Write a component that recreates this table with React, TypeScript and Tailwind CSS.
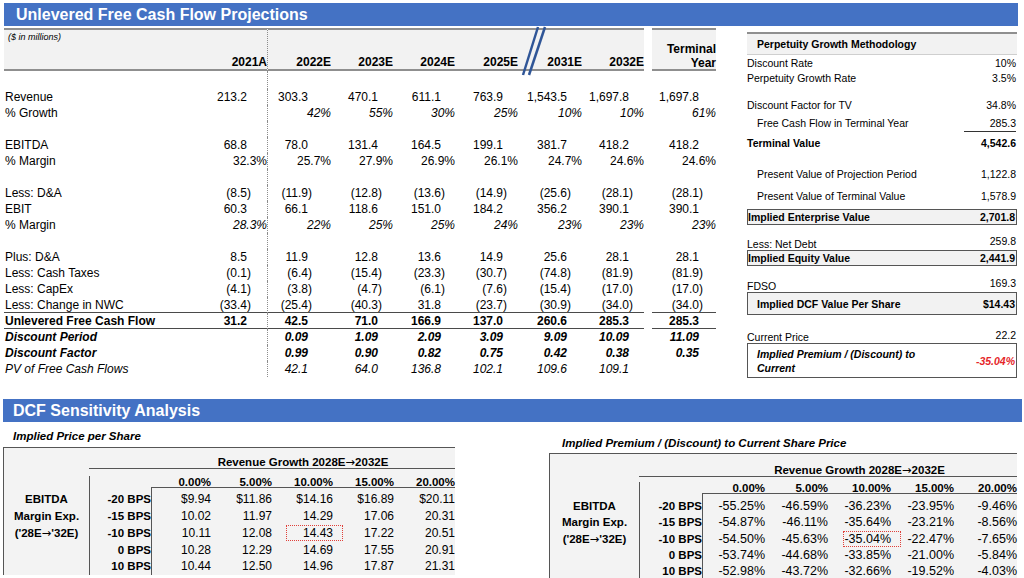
import React from "react";

/* ---------------- Projection table ---------------- */
const GRID = "grid grid-cols-[201px_63px_63px_62px_62px_63px_64px_62px_8px_64px]";
const PADS = ["pr-[16px]", "pr-[19px]", "pr-[11px]", "pr-[10px]", "pr-[11px]", "pr-[11px]", "pr-[11px]", "pr-[13px]"];
const DOT = "border-r border-dotted border-[#8c8c8c]";
const HDR = "bg-[#f2f2f2] shadow-[inset_0_2px_0_#8f8f8f,inset_0_-2px_0_#8f8f8f]";
const RULE = "shadow-[inset_0_-1px_0_#4a4a4a]";

type Kind = "num" | "pct" | "ipct" | "bold" | "bi" | "ital";
type Line = { label: string; kind: Kind; values: string[]; rule?: boolean };

const YEARS = ["2021A", "2022E", "2023E", "2024E", "2025E", "2031E", "2032E"];

const ROWS: (Line | null)[] = [
  { label: "Revenue", kind: "num", values: ["213.2", "303.3", "470.1", "611.1", "763.9", "1,543.5", "1,697.8", "1,697.8"] },
  { label: "% Growth", kind: "ipct", values: ["", "42%", "55%", "30%", "25%", "10%", "10%", "61%"] },
  null,
  { label: "EBITDA", kind: "num", values: ["68.8", "78.0", "131.4", "164.5", "199.1", "381.7", "418.2", "418.2"] },
  { label: "% Margin", kind: "pct", values: ["32.3%", "25.7%", "27.9%", "26.9%", "26.1%", "24.7%", "24.6%", "24.6%"] },
  null,
  { label: "Less: D&A", kind: "num", values: ["(8.5)", "(11.9)", "(12.8)", "(13.6)", "(14.9)", "(25.6)", "(28.1)", "(28.1)"] },
  { label: "EBIT", kind: "num", values: ["60.3", "66.1", "118.6", "151.0", "184.2", "356.2", "390.1", "390.1"] },
  { label: "% Margin", kind: "ipct", values: ["28.3%", "22%", "25%", "25%", "24%", "23%", "23%", "23%"] },
  null,
  { label: "Plus: D&A", kind: "num", values: ["8.5", "11.9", "12.8", "13.6", "14.9", "25.6", "28.1", "28.1"] },
  { label: "Less: Cash Taxes", kind: "num", values: ["(0.1)", "(6.4)", "(15.4)", "(23.3)", "(30.7)", "(74.8)", "(81.9)", "(81.9)"] },
  { label: "Less: CapEx", kind: "num", values: ["(4.1)", "(3.8)", "(4.7)", "(6.1)", "(7.6)", "(15.4)", "(17.0)", "(17.0)"] },
  { label: "Less: Change in NWC", kind: "num", rule: true, values: ["(33.4)", "(25.4)", "(40.3)", "31.8", "(23.7)", "(30.9)", "(34.0)", "(34.0)"] },
  { label: "Unlevered Free Cash Flow", kind: "bold", rule: true, values: ["31.2", "42.5", "71.0", "166.9", "137.0", "260.6", "285.3", "285.3"] },
  { label: "Discount Period", kind: "bi", values: ["", "0.09", "1.09", "2.09", "3.09", "9.09", "10.09", "11.09"] },
  { label: "Discount Factor", kind: "bi", values: ["", "0.99", "0.90", "0.82", "0.75", "0.42", "0.38", "0.35"] },
  { label: "PV of Free Cash Flows", kind: "ital", values: ["", "42.1", "64.0", "136.8", "102.1", "109.6", "109.1", ""] },
];

const labelStyle = (k: Kind) =>
  k === "bold" ? "font-bold" : k === "bi" ? "font-bold italic" : k === "ital" ? "italic" : "";
const valueStyle = (k: Kind) =>
  k === "bold" ? "font-bold" : k === "bi" ? "font-bold italic" : k === "ital" || k === "ipct" ? "italic" : "";

function ProjRow({ row }: { row: Line | null }) {
  if (!row) {
    return (
      <div className={`${GRID} h-[16px]`}>
        <div />
        <div className={DOT} />
      </div>
    );
  }
  const line = row.rule ? RULE : "";
  const pct = row.kind === "pct" || row.kind === "ipct";
  const cells: React.ReactNode[] = [];
  row.values.forEach((v, i) => {
    if (i === 7) cells.push(<div key="gap" />);
    cells.push(
      <div
        key={i}
        className={`whitespace-nowrap text-right ${pct ? "" : PADS[i]} ${valueStyle(row.kind)} ${i === 0 ? DOT : ""} ${line}`}
      >
        {v}
        {v && !pct && !v.startsWith("(") ? <span className="invisible">)</span> : null}
      </div>
    );
  });
  return (
    <div className={`${GRID} h-[16px] text-[12px] leading-[16px]`}>
      <div className={`whitespace-nowrap pl-[1px] ${labelStyle(row.kind)} ${line}`}>{row.label}</div>
      {cells}
    </div>
  );
}

function Projections() {
  return (
    <div className="relative w-[712px]">
      {/* header */}
      <div className={`${GRID} h-[43px]`}>
        <div className={`${HDR} pl-[4px] pt-[4px] text-[9px] italic leading-[11px]`}>($ in millions)</div>
        {YEARS.map((y, i) => (
          <div
            key={y}
            className={`${HDR} flex items-end justify-end pb-[2px] text-[12px] font-bold leading-[14px] ${i === 0 ? DOT : ""}`}
          >
            {y}
          </div>
        ))}
        <div />
        <div className={`${HDR} flex flex-col items-end justify-end pb-[1px] text-[12px] font-bold leading-[14px]`}>
          <span>Terminal</span>
          <span>Year</span>
        </div>
      </div>
      <div className={`${GRID} h-[18px]`}>
        <div />
        <div className={DOT} />
      </div>
      {ROWS.map((r, i) => (
        <ProjRow key={i} row={r} />
      ))}

      {/* axis break */}
      <svg className="absolute left-[515px] top-[-3px]" width="32" height="52" viewBox="0 0 32 52">
        <line x1="19" y1="2" x2="4" y2="50" stroke="#2f5597" strokeWidth="2.5" />
        <line x1="26" y1="2" x2="10" y2="50" stroke="#2f5597" strokeWidth="2.5" />
      </svg>
    </div>
  );
}

/* ---------------- Perpetuity panel ---------------- */
interface PRowProps {
  cls: string;
  label: React.ReactNode;
  value: string;
  labelCls?: string;
  valueCls?: string;
}
const PRow = ({ cls, label, value, labelCls = "", valueCls = "" }: PRowProps) => (
  <div className={`flex items-center justify-between pr-[1px] ${cls}`}>
    <span className={`whitespace-nowrap ${labelCls}`}>{label}</span>
    <span className={`whitespace-nowrap ${valueCls}`}>{value}</span>
  </div>
);

function Perpetuity() {
  return (
    <div className="ml-[31px] mt-[4px] w-[270px] text-[10.5px] leading-[14px]">
      <div className="flex h-[23px] items-center bg-[#f2f2f2] pl-[10px] font-bold shadow-[inset_0_2px_0_#8f8f8f,inset_0_-1px_0_#cfcfcf]">
        Perpetuity Growth Methodology
      </div>
      <PRow cls="h-[15px]" label="Discount Rate" value="10%" />
      <PRow cls="h-[15px]" label="Perpetuity Growth Rate" value="3.5%" />
      <PRow cls="mt-[12px] h-[16px]" label="Discount Factor for TV" value="34.8%" />
      <div className="mt-[2px] flex h-[18px] items-start justify-between pl-[10px] pr-[1px] leading-[16px]">
        <span>Free Cash Flow in Terminal Year</span>
        <span className="w-[52px] border-b border-[#333] text-right">285.3</span>
      </div>
      <PRow cls="mt-[2px] h-[16px] font-bold" label="Terminal Value" value="4,542.6" />
      <PRow cls="mt-[15px] h-[16px] pl-[10px]" label="Present Value of Projection Period" value="1,122.8" />
      <PRow cls="mt-[6px] h-[16px] pl-[10px]" label="Present Value of Terminal Value" value="1,578.9" />
      <PRow
        cls="mt-[5px] h-[16px] border border-[#555] bg-[#f2f2f2] font-bold"
        label="Implied Enterprise Value"
        value="2,701.8"
      />
      <PRow cls="mt-[9px] h-[16px]" label="Less: Net Debt" value="259.8" labelCls="pt-[3px]" valueCls="pb-[2px]" />
      <PRow
        cls="h-[16px] border border-[#555] bg-[#f2f2f2] font-bold"
        label="Implied Equity Value"
        value="2,441.9"
      />
      <PRow cls="mt-[10px] h-[16px]" label="FDSO" value="169.3" labelCls="pt-[3px]" valueCls="pb-[2px]" />
      <PRow
        cls="h-[23px] border border-[#555] bg-[#f2f2f2] pl-[9px] font-bold"
        label="Implied DCF Value Per Share"
        value="$14.43"
      />
      <PRow cls="mt-[13px] h-[15px]" label="Current Price" value="22.2" labelCls="pt-[3px]" valueCls="pb-[1px]" />
      <div className="flex h-[35px] items-center justify-between border border-[#555] pl-[9px] pr-[1px] font-bold italic">
        <span className="leading-[14px]">
          Implied Premium / (Discount) to
          <br />
          Current
        </span>
        <span className="text-[#e5262a]">-35.04%</span>
      </div>
    </div>
  );
}

/* ---------------- Sensitivity tables ---------------- */
const HEADS = ["0.00%", "5.00%", "10.00%", "15.00%", "20.00%"];
const BPS = ["-20 BPS", "-15 BPS", "-10 BPS", "0 BPS", "10 BPS"];

const Arrow = () => <span className="font-['DejaVu_Sans',sans-serif] font-normal">→</span>;

const EBITDA_LABEL: React.ReactNode[] = [
  "EBITDA",
  "Margin Exp.",
  <>
    ('28E
    <Arrow />
    '32E)
  </>,
];

const PRICE = [
  ["$9.94", "$11.86", "$14.16", "$16.89", "$20.11"],
  ["10.02", "11.97", "14.29", "17.06", "20.31"],
  ["10.11", "12.08", "14.43", "17.22", "20.51"],
  ["10.28", "12.29", "14.69", "17.55", "20.91"],
  ["10.44", "12.50", "14.96", "17.87", "21.31"],
];

const PREMIUM = [
  ["-55.25%", "-46.59%", "-36.23%", "-23.95%", "-9.46%"],
  ["-54.87%", "-46.11%", "-35.64%", "-23.21%", "-8.56%"],
  ["-54.50%", "-45.63%", "-35.04%", "-22.47%", "-7.65%"],
  ["-53.74%", "-44.68%", "-33.85%", "-21.00%", "-5.84%"],
  ["-52.98%", "-43.72%", "-32.66%", "-19.52%", "-4.03%"],
];

interface SensProps {
  grid: string;
  titleCls: string;
  headCls: string;
  gapCls: string;
  rowCls: string;
  valCls: string;
  data: string[][];
  hlCls: string;
}

function Sensitivity({ grid, titleCls, headCls, gapCls, rowCls, valCls, data, hlCls }: SensProps) {
  const edge = "border-l border-[#555]";
  return (
    <div className="border-l border-t border-[#555] bg-[#f3f3f3] text-[11.5px] leading-[14px]">
      <div className={`${grid} ${titleCls}`}>
        <div />
        <div className="shadow-[inset_0_-1px_0_#555]" />
        <div className="col-span-5 flex items-end justify-center whitespace-nowrap font-bold shadow-[inset_0_-1px_0_#555]">
          <span>
            Revenue Growth 2028E
            <Arrow />
            2032E
          </span>
        </div>
      </div>
      <div className={`${grid} ${headCls}`}>
        <div />
        <div className={edge} />
        {HEADS.map((h) => (
          <div key={h} className="text-right font-bold leading-[12px] shadow-[inset_0_-1px_0_#555]">
            {h}
          </div>
        ))}
      </div>
      <div className={`${grid} ${gapCls}`}>
        <div />
        <div className={edge} />
        <div className={edge} />
      </div>
      {data.map((vals, ri) => (
        <div key={ri} className={`${grid} ${rowCls}`}>
          <div className="flex items-center justify-center whitespace-nowrap font-bold">{EBITDA_LABEL[ri] ?? ""}</div>
          <div className={`${edge} flex items-center justify-end whitespace-nowrap font-bold`}>{BPS[ri]}</div>
          {vals.map((v, ci) => (
            <div
              key={ci}
              className={`relative flex items-center justify-end whitespace-nowrap ${valCls} ${ci === 0 ? edge : ""}`}
            >
              {v}
              {ri === 2 && ci === 2 && (
                <span className={`absolute top-0 h-full border-[1.5px] border-dotted border-[#e0403a] ${hlCls}`} />
              )}
            </div>
          ))}
        </div>
      ))}
    </div>
  );
}

/* ---------------- Page ---------------- */
export default function App() {
  return (
    <div className="h-[578px] w-[1024px] overflow-hidden bg-white font-['Liberation_Sans',Arial,Helvetica,sans-serif] text-black">
      {/* projections title */}
      <div className="ml-[4px] mt-[3px] flex h-[23px] w-[1014px] items-center bg-[#4472c4] pl-[12px] text-[16px] font-bold text-white">
        Unlevered Free Cash Flow Projections
      </div>

      <div className="mt-[2px] flex items-start pl-[4px]">
        <Projections />
        <Perpetuity />
      </div>

      {/* sensitivity title */}
      <div className="ml-[3px] mt-[21px] flex h-[23px] w-[1019px] items-center bg-[#4472c4] pl-[10px] text-[16px] font-bold text-white">
        DCF Sensitivity Analysis
      </div>

      <div className="flex items-start">
        <div className="ml-[3px] w-[452px]">
          <div className="mt-[7px] h-[14px] pl-[10px] text-[11.5px] font-bold italic leading-[14px]">
            Implied Price per Share
          </div>
          <div className="mt-[4px]">
            <Sensitivity
              grid="grid grid-cols-[85px_62px_60px_61px_61px_61px_61px]"
              titleCls="h-[23px] pb-[2px]"
              headCls="h-[17px] pt-[5px]"
              gapCls="h-[3px]"
              rowCls="h-[16.75px]"
              valCls="text-[12px]"
              data={PRICE}
              hlCls="left-[14px] w-[57px]"
            />
          </div>
        </div>

        <div className="ml-[94px] w-[468px]">
          <div className="mt-[14px] h-[14px] pl-[13px] text-[11.5px] font-bold italic leading-[14px]">
            Implied Premium / (Discount) to Current Share Price
          </div>
          <div className="mt-[3px]">
            <Sensitivity
              grid="grid grid-cols-[89px_63px_63px_63px_63px_63px_63px]"
              titleCls="h-[24px] pb-[1px]"
              headCls="h-[16px] pt-[4px]"
              gapCls="h-[4px]"
              rowCls="h-[16.25px]"
              valCls="text-[12.5px]"
              data={PREMIUM}
              hlCls="left-[15px] w-[58px]"
            />
          </div>
        </div>
      </div>
    </div>
  );
}
